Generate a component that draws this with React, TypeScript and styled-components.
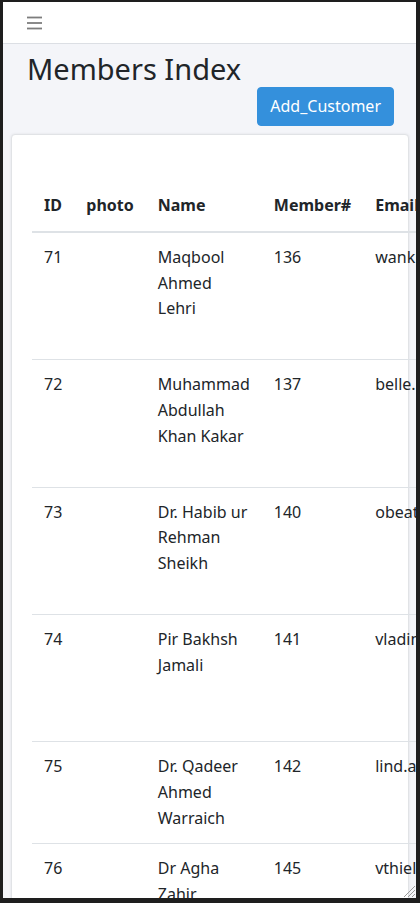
import React from "react";
import styled, { createGlobalStyle } from "styled-components";

const Global = createGlobalStyle`
  html, body { margin: 0; padding: 0; background: #1e1e1e; }
  body { font-family: "Noto Sans", "Open Sans", sans-serif; }
  * { box-sizing: border-box; }
`;

const Frame = styled.div`
  height: 903px;
  padding: 2px 4px 5px 3px;
  background: #1e1e1e;
`;

const Window = styled.div`
  position: relative;
  height: 896px;
  overflow: hidden;
  background: #f4f5f9;
  color: #212529;
  font-size: 16px;
  line-height: 1.6;
`;

const Navbar = styled.nav`
  height: 42px;
  display: flex;
  align-items: center;
  padding: 0 24px;
  background: #fff;
  border-bottom: 1px solid #dcdfe4;
`;

const Toggler = styled.button`
  display: flex;
  padding: 0;
  border: 0;
  background: none;
`;

const Header = styled.header`
  display: flex;
  flex-direction: column;
  padding: 8px 22px 0 24px;
`;

const Title = styled.h1`
  margin: 0;
  font-size: 29px;
  font-weight: 400;
  line-height: 1.2;
`;

const AddButton = styled.button`
  align-self: flex-end;
  padding: 6px 12px;
  border: 1px solid #3490dc;
  border-radius: 4px;
  background: #3490dc;
  color: #fff;
  font-family: inherit;
  font-size: 16px;
  line-height: 1.6;
`;

const Card = styled.section`
  margin: 8px 7px 0 8px;
  padding: 20px;
  background: #fff;
  border: 1px solid #e1e3e6;
  border-radius: 4px;
  box-shadow: 0 0 3px rgba(0, 0, 0, 0.08);
`;

const Table = styled.table`
  width: 100%;
  margin-top: 26px;
  border-collapse: collapse;
`;

const Th = styled.th<{ $w?: number }>`
  box-sizing: content-box;
  ${(p) => (p.$w ? `width: ${p.$w}px;` : "")}
  padding: 12px;
  text-align: left;
  vertical-align: bottom;
  font-weight: 700;
  border-bottom: 2px solid #dee2e6;
  white-space: nowrap;
`;

const Td = styled.td`
  padding: 12px;
  vertical-align: top;
  border-top: 1px solid #dee2e6;
`;

const AddressTd = styled(Td)`
  white-space: pre-line;
  min-width: 160px;
`;

const Grip = styled.svg`
  position: absolute;
  right: 1px;
  bottom: 1px;
`;

type Member = { id: number; name: string; no: number; email: string; address: string };

const members: Member[] = [
  { id: 71, name: "Maqbool Ahmed Lehri", no: 136, email: "wankunding@example.org", address: "8120 Kuhn Trail\nApt. 123\nNew Gerald,\nTX 12345" },
  { id: 72, name: "Muhammad Abdullah Khan Kakar", no: 137, email: "belle.kuhn@example.com", address: "54 Runte Ways\nSuite 870\nPort Alfreda,\nOH 60211" },
  { id: 73, name: "Dr. Habib ur Rehman Sheikh", no: 140, email: "obeatty@example.net", address: "903 Erin Forks\nSuite 021\nLake Myron,\nWI 44021" },
  { id: 74, name: "Pir Bakhsh Jamali", no: 141, email: "vladimir.hane@example.org", address: "17 Cole Summit\nApt. 442\nEast Maud,\nKS 90112" },
  { id: 75, name: "Dr. Qadeer Ahmed Warraich", no: 142, email: "lind.abagail@example.com", address: "220 Kris Drive\nNorth Elsa,\nNV 12733" },
  { id: 76, name: "Dr Agha Zahir Durrani", no: 145, email: "vthiel@example.net", address: "66 Block Crest\nApt. 9\nWest Dana,\nMT 33410" },
];

export default function App() {
  return (
    <>
      <Global />
      <Frame>
        <Window>
          <Navbar>
            <Toggler aria-label="Toggle navigation">
              <svg width="15" height="14" viewBox="0 0 15 14">
                <g stroke="#7d7d7d" strokeWidth="1.8" strokeLinecap="butt">
                  <line x1="0" y1="1.5" x2="15" y2="1.5" />
                  <line x1="0" y1="7" x2="15" y2="7" />
                  <line x1="0" y1="12.5" x2="15" y2="12.5" />
                </g>
              </svg>
            </Toggler>
          </Navbar>
          <Header>
            <Title>Members Index</Title>
            <AddButton>Add_Customer</AddButton>
          </Header>
          <Card>
            <Table>
              <thead>
                <tr>
                  <Th $w={19}>ID</Th>
                  <Th $w={47}>photo</Th>
                  <Th $w={92}>Name</Th>
                  <Th $w={78}>Member#</Th>
                  <Th>Email</Th>
                  <Th>Address</Th>
                </tr>
              </thead>
              <tbody>
                {members.map((m) => (
                  <tr key={m.id}>
                    <Td>{m.id}</Td>
                    <Td></Td>
                    <Td>{m.name}</Td>
                    <Td>{m.no}</Td>
                    <Td>{m.email}</Td>
                    <AddressTd>{m.address}</AddressTd>
                  </tr>
                ))}
              </tbody>
            </Table>
          </Card>
          <Grip width="12" height="12" viewBox="0 0 12 12">
            <g stroke="#9a9a9a" strokeWidth="1">
              <line x1="1" y1="12" x2="12" y2="1" />
              <line x1="5" y1="12" x2="12" y2="5" />
              <line x1="9" y1="12" x2="12" y2="9" />
            </g>
          </Grip>
        </Window>
      </Frame>
    </>
  );
}
